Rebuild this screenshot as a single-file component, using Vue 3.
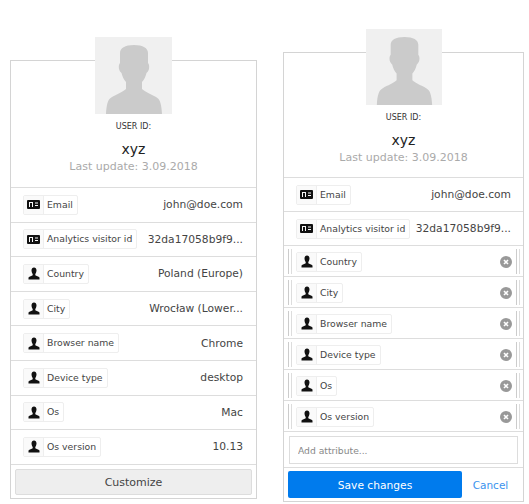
<template>
  <div class="page">
    <!-- read only card -->
    <div class="card card-view">
      <div class="avatar">
        <svg viewBox="0 0 77 77">
          <path :d="avatarPath" fill="#cbcbcb" />
        </svg>
      </div>
      <div class="head">
        <div class="user-id">USER ID:</div>
        <div class="user-name">xyz</div>
        <div class="updated">Last update: 3.09.2018</div>
      </div>
      <div v-for="row in rows" :key="row.label" class="row">
        <span class="tag">
          <span class="tag-icon">
            <svg v-if="row.card" viewBox="0 0 13 9" width="13" height="9">
              <path :d="cardPath" fill="#111" fill-rule="evenodd" />
            </svg>
            <svg v-else viewBox="0 0 12 13" width="12" height="13">
              <path :d="personPath" fill="#111" />
            </svg>
          </span>
          <span class="tag-label">{{ row.label }}</span>
        </span>
        <span class="value">{{ row.value }}</span>
      </div>
      <div class="customize-wrap">
        <button class="customize" type="button">Customize</button>
      </div>
    </div>

    <!-- edit card -->
    <div class="card card-edit">
      <div class="avatar">
        <svg viewBox="0 0 77 77">
          <path :d="avatarPath" fill="#cbcbcb" />
        </svg>
      </div>
      <div class="head">
        <div class="user-id">USER ID:</div>
        <div class="user-name">xyz</div>
        <div class="updated">Last update: 3.09.2018</div>
      </div>
      <div v-for="row in fixedRows" :key="row.label" class="row">
        <span class="tag">
          <span class="tag-icon">
            <svg viewBox="0 0 13 9" width="13" height="9">
              <path :d="cardPath" fill="#111" fill-rule="evenodd" />
            </svg>
          </span>
          <span class="tag-label">{{ row.label }}</span>
        </span>
        <span class="value">{{ row.value }}</span>
      </div>
      <div v-for="row in editRows" :key="row.label" class="row row-edit">
        <span class="handle"></span>
        <span class="tag">
          <span class="tag-icon">
            <svg viewBox="0 0 12 13" width="12" height="13">
              <path :d="personPath" fill="#111" />
            </svg>
          </span>
          <span class="tag-label">{{ row.label }}</span>
        </span>
        <svg class="remove" viewBox="0 0 12 12" width="12" height="12">
          <circle cx="6" cy="6" r="6" fill="#999" />
          <path d="M4 4l4 4M8 4l-4 4" stroke="#fff" stroke-width="1.600" />
        </svg>
        <span class="handle"></span>
      </div>
      <div class="add-row">
        <input class="add-input" type="text" placeholder="Add attribute..." />
      </div>
      <div class="footer">
        <button class="save" type="button">Save changes</button>
        <a class="cancel">Cancel</a>
      </div>
    </div>
  </div>
</template>

<script setup>
const avatarPath =
  "M25 16c0-5 5-8 14-8s14 3 14 8v10c1 1 1.500 3 1 6-.5 2-1.500 3-2.500 4-1 4-2.500 7-4.500 9v7c3 3 9 5 14 8 4 2 5.500 7 6 17H11c.5-10 2-15 6-17 5-3 11-5 14-8v-7c-2-2-3.500-5-4.500-9-1-1-2-2-2.500-4-.5-3 0-5 1-6z";
const personPath =
  "M6 .5c1.500 0 2.500 1.200 2.500 2.800 0 1.400-.5 2.800-1.200 3.700v1.300c1 .8 3.200 1.200 4.200 2.200v2H.5v-2c1-1 3.200-1.400 4.200-2.200V7C4 6.100 3.500 4.700 3.500 3.300 3.500 1.700 4.500.5 6 .5z";
const cardPath =
  "M1 0h11a1 1 0 0 1 1 1v7a1 1 0 0 1-1 1H1a1 1 0 0 1-1-1V1a1 1 0 0 1 1-1zM2 2v5h1V3h2v4h1V2zM8 2.500v1h3v-1zM8 5v1h3V5z";

const rows = [
  { label: "Email", value: "john@doe.com", card: true },
  { label: "Analytics visitor id", value: "32da17058b9f9...", card: true },
  { label: "Country", value: "Poland (Europe)" },
  { label: "City", value: "Wrocław (Lower..." },
  { label: "Browser name", value: "Chrome" },
  { label: "Device type", value: "desktop" },
  { label: "Os", value: "Mac" },
  { label: "Os version", value: "10.13" },
];

const fixedRows = rows.slice(0, 2);
const editRows = rows.slice(2);
</script>

<style>
html,
body {
  background: #fff;
}
</style>

<style scoped>
.page {
  display: flex;
  align-items: flex-start;
  gap: 26px;
  padding-left: 10px;
  font-family: "DejaVu Sans", Verdana, sans-serif;
  color: #444;
}

.card {
  border: 1px solid #d4d4d4;
  box-sizing: border-box;
  background: #fff;
}

.card-view {
  width: 247px;
  height: 439px;
  margin-top: 60px;
}

.card-edit {
  width: 241px;
  height: 450px;
  margin-top: 52px;
}

.avatar {
  width: 77px;
  height: 77px;
  margin: -24px auto 0;
  background: #f0f0f0;
}

.card-edit .avatar {
  width: 76px;
  height: 76px;
}

.avatar svg {
  display: block;
  width: 100%;
  height: 100%;
}

.head {
  height: 73px;
  text-align: center;
  padding-top: 7px;
  box-sizing: border-box;
}

.card-edit .head {
  height: 72px;
}

.user-id {
  font-size: 8px;
  line-height: 12px;
  color: #333;
}

.user-name {
  font-size: 14px;
  line-height: 20px;
  margin-top: 6px;
  color: #222;
}

.updated {
  font-size: 11px;
  line-height: 16px;
  color: #aaa;
}

.row {
  display: flex;
  align-items: center;
  justify-content: space-between;
  height: 34.600px;
  box-sizing: border-box;
  border-top: 1px solid #ddd;
  padding: 0 13px 0 12px;
}

.card-edit .row {
  height: 34px;
  padding-right: 12px;
}

.card-edit .row-edit {
  height: 31px;
  padding: 1px 3px 0 4px;
  justify-content: flex-start;
}

.tag {
  display: inline-flex;
  height: 20px;
  box-sizing: border-box;
  border: 1px solid #eee;
  border-radius: 2px;
  flex-shrink: 0;
}

.tag-icon {
  width: 19px;
  display: flex;
  align-items: center;
  justify-content: center;
  background: #fafafa;
  border-right: 1px solid #eee;
}

.tag-label {
  font-size: 9.300px;
  line-height: 18px;
  padding: 0 4px 0 3px;
  color: #444;
}

.value {
  font-size: 10.700px;
  color: #444;
  white-space: nowrap;
}

.handle {
  width: 4px;
  height: 25px;
  box-sizing: border-box;
  border-left: 1px solid #ccc;
  border-right: 1px solid #ddd;
  flex-shrink: 0;
}

.row-edit .tag {
  margin-left: 4px;
}

.remove {
  margin-left: auto;
  margin-right: 4px;
}

.add-row {
  height: 36px;
  border-top: 1px solid #ddd;
  padding: 4px 5px;
  box-sizing: border-box;
}

.add-input {
  display: block;
  width: 100%;
  height: 28px;
  box-sizing: border-box;
  border: 1px solid #ddd;
  padding: 0 8px;
  font-family: inherit;
  font-size: 9.200px;
  color: #444;
  outline: none;
}

.add-input::placeholder {
  color: #888;
}

.footer {
  display: flex;
  align-items: center;
  border-top: 1px solid #ddd;
  padding: 3px 4px;
  height: 34px;
  box-sizing: border-box;
}

.save {
  width: 174px;
  height: 27px;
  border: none;
  border-radius: 2px;
  background: #007bed;
  color: #fff;
  font-family: inherit;
  font-size: 10.700px;
  padding-top: 2px;
}

.cancel {
  flex: 1;
  text-align: center;
  color: #3b93ee;
  font-size: 10.500px;
}

.customize-wrap {
  border-top: 1px solid #ddd;
  padding: 4px 4px 0;
}

.customize {
  display: block;
  width: 100%;
  height: 26px;
  background: #eee;
  border: 1px solid #ddd;
  border-radius: 2px;
  color: #444;
  font-family: inherit;
  font-size: 11px;
  padding-top: 2px;
}
</style>
